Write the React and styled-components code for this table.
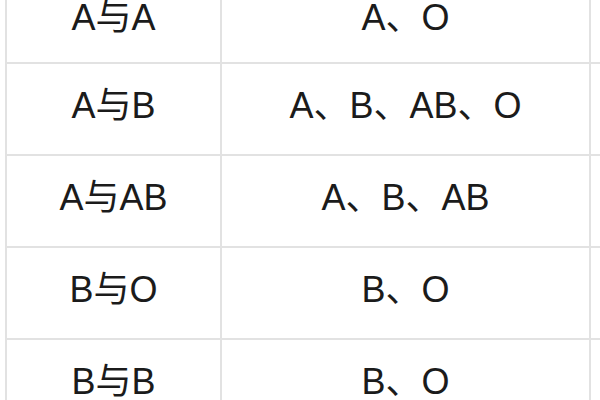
import React from 'react';
import styled, { createGlobalStyle } from 'styled-components';

const GlobalStyle = createGlobalStyle`
    html, body {
        margin: 0;
        padding: 0;
        background: #ffffff;
        overflow: hidden;
    }
`

const Page = styled.div`
    width: 600px;
    height: 400px;
    overflow: hidden;
    background: #ffffff;
`

const Table = styled.table`
    margin: -22px 0 0 5px;
    border-collapse: collapse;
    table-layout: fixed;
    width: 800px;
    font-family: "Liberation Sans", "Noto Sans CJK SC", Arial, sans-serif;
    font-size: 36px;
    line-height: 1;
    color: #1b1b1b;
`

const Row = styled.tr`
    height: ${props => props.$h}px;
`

const Cell = styled.td`
    border: 2px solid #e2e2e2;
    text-align: center;
    vertical-align: middle;
    padding: 0 0 6px 0;
    white-space: nowrap;
`

// blood type pairs and possible children
const rows = [
    ['A与A', 'A、O'],
    ['A与B', 'A、B、AB、O'],
    ['A与AB', 'A、B、AB'],
    ['B与O', 'B、O'],
    ['B与B', 'B、O'],
];

const App = () => {
    return (
        <Page>
            <GlobalStyle />
            <Table>
                <colgroup>
                    <col style={{width: '215px'}} />
                    <col style={{width: '369px'}} />
                    <col style={{width: '216px'}} />
                </colgroup>
                <tbody>
                    {rows.map((r, i) => (
                        <Row key={i} $h={i === 0 ? 84 : 92}>
                            <Cell>{r[0]}</Cell>
                            <Cell>{r[1]}</Cell>
                            <Cell />
                        </Row>
                    ))}
                </tbody>
            </Table>
        </Page>
    );
}

export default App;
